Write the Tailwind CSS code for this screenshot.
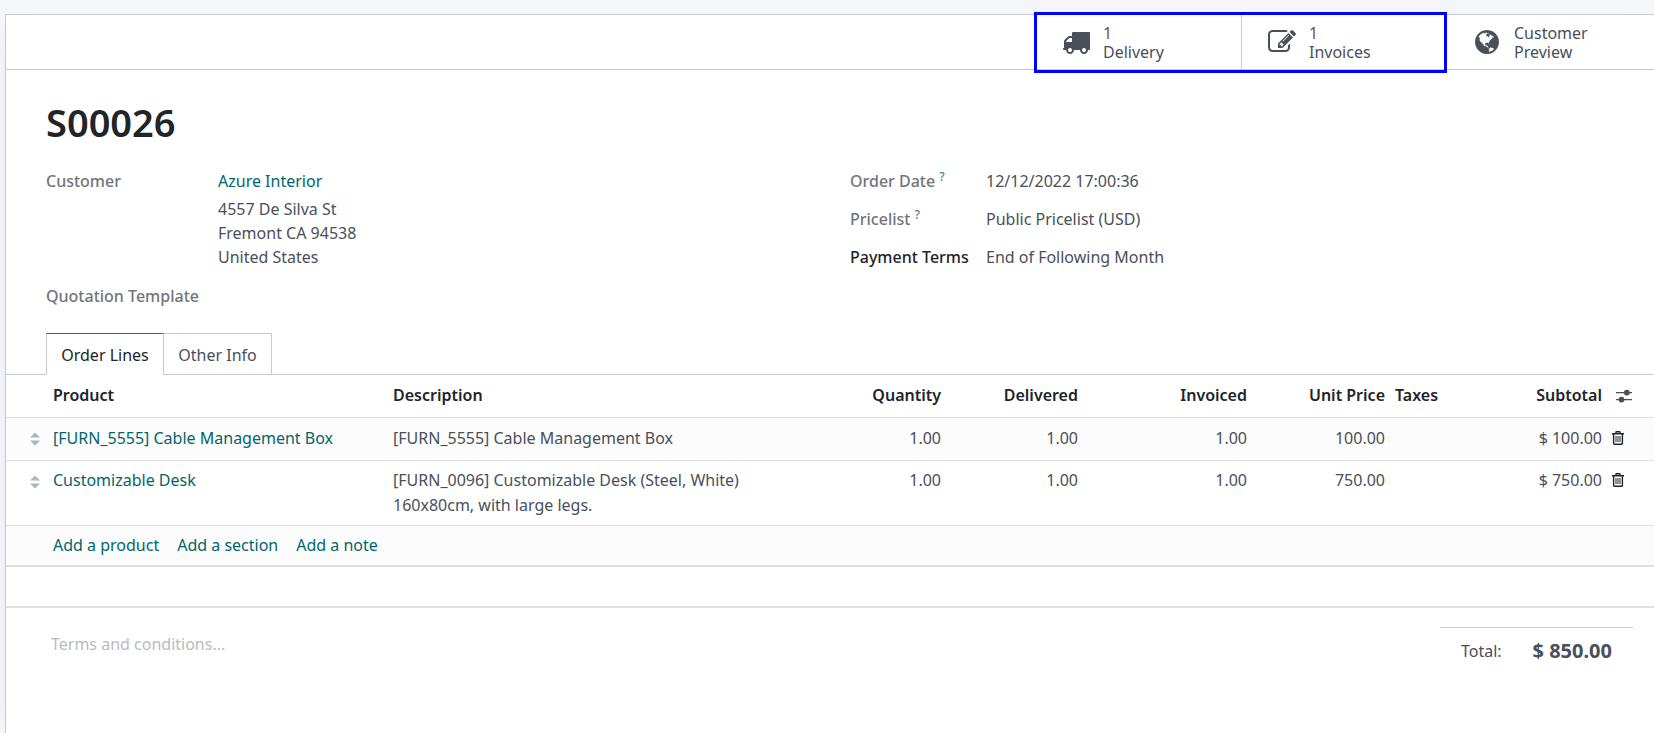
<!DOCTYPE html>
<html lang="en">
<head>
<meta charset="utf-8">
<title>S00026</title>
<script src="https://cdn.jsdelivr.net/npm/@tailwindcss/browser@4"></script>
</head>
<body class="min-h-screen flex flex-col bg-[#f5f6fa] pl-[5px] pt-[14px] text-base leading-6 text-[#4a4f59] overflow-x-hidden" style="font-family:'Noto Sans','Open Sans',sans-serif">
<svg class="hidden" aria-hidden="true">
  <symbol id="trash" viewBox="0 0 12 14"><path fill="none" stroke="#212529" stroke-width="1.4" d="M0 2.8h12M1.6 3v9.6q0 .7.7.7h7.4q.7 0 .7-.7V3M3.6 2.6L4.2.8h3.6l.6 1.8"/><path fill="none" stroke="#212529" d="M4 5v6M6 5v6M8 5v6"/></symbol>
  <symbol id="grip" viewBox="0 0 10 14"><path fill="#adb5bd" d="M0 5.5L5 .5l5 5zM0 8.5l5 5 5-5z"/></symbol>
</svg>
<main class="grow flex flex-col bg-white border-t border-l border-[#c8cad2] shadow-[0_5px_20px_-15px_rgba(0,0,0,0.4)]">
  <header class="flex justify-end h-[55px] border-b border-[#c8cad2] leading-[19px]">
    <div class="relative flex w-[411px]">
      <button class="flex-1 flex items-center gap-[13px] pl-[26px] text-left border-r border-[#c8cad2]">
        <svg class="size-7 shrink-0" viewBox="0 0 1792 1792" fill="#4a4f59"><path d="M640 1408q0-52-38-90t-90-38-90 38-38 90 38 90 90 38 90-38 38-90zm-384-512h384v-256h-158q-13 0-22 9l-195 195q-9 9-9 22v30zm1280 512q0-52-38-90t-90-38-90 38-38 90 38 90 90 38 90-38 38-90zm256-1088v1024q0 15-4 26.5t-13.5 18.5-16.5 11.5-23.5 6-22.5 2-25.5 0-22.5-.5q0 106-75 181t-181 75-181-75-75-181h-384q0 106-75 181t-181 75-181-75-75-181h-64q-3 0-22.5.5t-25.5 0-22.5-2-23.5-6-16.5-11.5-13.5-18.5-4-26.5q0-26 19-45t45-19v-320q0-8-.5-35t0-38 2.5-34.5 6.5-37 14-30.5 22.5-30l198-198q19-19 50.5-32t58.5-13h160v-192q0-26 19-45t45-19h1024q26 0 45 19t19 45z"/></svg>
        <span class="pt-0.5"><span class="block text-[#714b67]">1</span><span class="block">Delivery</span></span>
      </button>
      <button class="flex-1 flex items-center gap-[13px] pl-[26px] text-left">
        <svg class="size-7 shrink-0" viewBox="0 0 1792 1792" fill="#4a4f59"><path d="M888 1184l116-116-152-152-116 116v56h96v96h56zm440-720q-16-16-33 1l-350 350q-17 17-1 33t33-1l350-350q17-17 1-33zm80 594v190q0 119-84.5 203.5t-203.5 84.5h-832q-119 0-203.5-84.5t-84.5-203.5v-832q0-119 84.5-203.5t203.5-84.5h832q63 0 117 25 15 7 18 23 3 17-9 29l-49 49q-14 14-32 8-23-6-45-6h-832q-66 0-113 47t-47 113v832q0 66 47 113t113 47h832q66 0 113-47t47-113v-126q0-13 9-22l64-64q15-15 35-7t20 29zm-96-738l288 288-672 672h-288v-288zm444 132l-92 92-288-288 92-92q28-28 68-28t68 28l152 152q28 28 28 68t-28 68z"/></svg>
        <span class="pt-0.5"><span class="block text-[#714b67]">1</span><span class="block">Invoices</span></span>
      </button>
      <div class="absolute -left-0.5 right-0 -top-[3px] -bottom-1 border-3 border-[#0000ff] pointer-events-none"></div>
    </div>
    <button class="w-[207px] flex items-center gap-[13px] pl-[26px] text-left">
      <svg class="size-7 shrink-0" viewBox="0 0 1792 1792" fill="#4a4f59"><path d="M896 128q209 0 385.5 103t279.5 279.5 103 385.5-103 385.5-279.5 279.5-385.5 103-385.5-103-279.5-279.5-103-385.5 103-385.5 279.5-279.5 385.5-103zm274 521q-2 1-9.5 9.5t-13.5 9.5q2 0 4.5-5t5-11 3.5-7q6-7 22-15 14-6 52-12 34-8 51 11-2-2 9.5-13t14.5-12q3-2 15-4.5t15-7.5l2-22q-12 1-17.5-7t-6.5-21q0 2-6 8 0-7-4.5-8t-11.5 1-9 1q-10-3-15-7.5t-8-16.5-4-15q-2-5-9.5-11t-9.5-10q-1-2-2.5-5.5t-3-6.5-4-5.5-5.5-2.5-7 5-7.5 10-4.5 5q-3-2-6-1.5t-4.5 1-4.5 3-5 3.5q-3 2-8.5 3t-8.5 2q15-5-1-11-10-4-16-3 9-4 7.5-12t-8.5-14h5q-1-4-8.5-8.5t-17.5-8.5-13-6q-8-5-34-9.5t-33-.5q-5 6-4.5 10.5t4 14 3.5 12.5q1 6-5.5 13t-6.5 12q0 7 14 15.5t10 21.5q-3 8-16 16t-16 12q-5 8-1.5 18.5t10.5 16.5q2 2 1.5 4t-3.5 4.5-5.5 4-6.5 3.5l-3 2q-11 5-20.5-6t-13.5-26q-7-25-16-30-23-8-29 1-5-13-41-26-25-9-58-4 6-1 0-15-7-15-19-12 3-6 4-17.5t1-13.5q3-13 12-23 1-1 7-8.5t9.5-13.5.5-6q35 4 50-11 5-5 11.5-17t10.5-17q9-6 14-5.5t14.5 5.5 14.5 5q14 1 15.5-11t-7.5-20q12 1 3-17-4-7-8-9-12-4-27 5-8 4 2 8-1-1-9.5 10.5t-16.5 17.5-16-5q-1-1-5.5-13.5t-9.5-13.5q-8 0-16 15 3-8-11-15t-24-8q19-12-8-27-7-4-20.5-5t-19.5 4q-5 7-5.5 11.5t5 8 10.5 5.5 11.5 4 8.5 3q14 10 8 14-2 1-8.5 3.5t-11.5 4.5-6 4q-3 4 0 14t-2 14q-5-5-9-17.5t-7-16.5q7 9-25 6l-10-1q-4 0-16 2t-20.5 1-13.5-8q-4-8 0-20 1-4 4-2-4-3-11-9.5t-10-8.5q-46 15-94 41 6 1 12-1 5-2 13-6.5t10-5.5q34-14 42-7l5-5q14 16 20 25-7-4-30-1-20 6-22 12 7 12 5 18-4-3-11.5-10t-14.5-11-15-5q-16 0-22 1-146 80-235 222 7 7 12 8 4 1 5 9t2.5 11 11.5-3q9 8 3 19 1-1 44 27 19 17 21 21 3 11-10 18-1-2-9-9t-9-4q-3 5 .5 18.5t10.5 12.5q-7 0-9.5 16t-2.5 35.5-1 23.5l2 1q-3 12 5.5 34.5t21.5 19.5q-13 3 20 43 6 8 8 9 3 2 12 7.5t15 10 10 10.5q4 5 10 22.5t14 23.5q-2 6 9.5 20t10.5 23q-1 0-2.5 1t-2.5 1q3 7 15.5 14t15.5 13q1 3 2 10t3 11 8 2q2-20-24-62-15-25-17-29-3-5-5.5-15.5t-4.5-14.5q2 0 6 1.5t8.5 3.5 7.5 4 2 3q-3 7 2 17.5t12 18.5 17 19 12 13q6 6 14 19.5t0 13.5q9 0 20 10.5t17 19.5q5 8 8 26t5 24q2 7 8.5 13.5t12.5 9.5l16 8 13 7q5 2 18.5 10.5t21.5 11.5q10 4 16 4t14.5-2.5 13.5-3.5q15-2 29 15t21 21q36 19 55 11-2 1 .5 7.5t8 15.5 9 14.5 5.5 8.5q5 6 18 15t18 15q6-4 7-9-3 8 7 20t18 10q14-3 14-32-31 15-49-18 0-1-2.5-5.5t-4-8.5-2.5-8.5 0-7.5 5-3q9 0 10-3.5t-2-12.5-4-13q-1-8-11-20t-12-15q-5 9-16 8t-16-9q0 1-1.5 5.5t-1.5 6.5q-13 0-15-1 1-3 2.5-17.5t3.5-22.5q1-4 5.5-12t7.5-14.5 4-12.5-4.5-9.5-17.5-2.5q-19 1-26 20-1 3-3 10.5t-5 11.5-9 7q-7 3-24 2t-24-5q-13-8-22.5-29t-9.5-37q0-10 2.5-26.5t3-25-5.5-24.5q3-2 9-9.5t10-10.5q2-1 4.5-1.5t4.5 0 4-1.5 3-6q-1-1-4-3-3-3-4-3 7 3 28.5-1.5t27.5 1.5q15 11 22-2 0-1-2.5-9.5t-.5-13.5q5 27 29 9 3 3 15.5 5t17.5 5q3 2 7 5.5t5.5 4.5 5-.5 8.5-6.5q10 14 12 24 11 40 19 44 7 3 11 2t4.5-9.5 0-14-1.5-12.5l-1-8v-18l-1-8q-15-3-18.5-12t1.5-18.5 15-18.5q1-1 8-3.5t15.5-6.5 12.5-8q21-19 15-35 7 0 11-9-1 0-5-3t-7.5-5-4.5-2q9-5 2-16 5-3 7.5-11t7.5-10q9 12 21 2 8-8 1-16 5-7 20.5-10.5t18.5-9.5q7 2 8-2t1-12 3-12q4-5 15-9t13-5l17-11q3-4 0-4 18 2 31-11 10-11-6-20 3-6-3-9.5t-15-5.5q3-1 11.5-.5t10.5-1.5q15-10-7-16-17-5-43 12zm-163 877q206-36 351-189-3-3-12.5-4.5t-12.5-3.5q-18-7-24-8 1-7-2.5-13t-8-9-12.5-8-11-7q-2-2-7-6t-7-5.5-7.5-4.5-8.5-2-10 1l-3 1q-3 1-5.5 2.5t-5.5 3-4 3 0 2.5q-21-17-36-22-5-1-11-5.5t-10.5-7-10-1.5-11.5 7q-5 5-6 15t-2 13q-7-5 0-17.5t2-18.5q-3-6-10.5-4.5t-12 4.5-11.5 8.5-9 6.5-8.5 5.5-8.5 7.5q-3 4-6 12t-5 11q-2-4-11.5-6.5t-9.5-5.5q2 10 4 35t5 38q7 31-12 48-27 25-29 40-4 22 12 26 0 7-8 20.5t-7 21.5q0 6 2 16z"/></svg>
      <span class="w-24 pt-0.5">Customer Preview</span>
    </button>
  </header>

  <section class="pl-10 pt-7">
    <h1 class="text-[38px] leading-12 font-semibold text-[#212529]">S00026</h1>
    <div class="grid grid-cols-2 mt-[23px]">
      <dl class="grid grid-cols-[172px_1fr] content-start gap-y-[15px]">
        <dt class="font-medium text-[#71757b]">Customer</dt>
        <dd><a href="#" class="text-[#01666b] block mb-1">Azure Interior</a>4557 De Silva St<br>Fremont CA 94538<br>United States</dd>
        <dt class="font-medium text-[#71757b] col-span-2">Quotation Template</dt>
      </dl>
      <dl class="grid grid-cols-[136px_1fr] content-start gap-y-[14px]">
        <dt class="font-medium text-[#71757b]">Order Date <sup class="text-[#01666b]/80 text-xs leading-none -top-[6px]">?</sup></dt>
        <dd>12/12/2022 17:00:36</dd>
        <dt class="font-medium text-[#71757b]">Pricelist <sup class="text-[#01666b]/80 text-xs leading-none -top-[6px]">?</sup></dt>
        <dd>Public Pricelist (USD)</dd>
        <dt class="font-medium text-[#212529]">Payment Terms</dt>
        <dd>End of Following Month</dd>
      </dl>
    </div>
  </section>

  <nav class="flex mt-[25px] pl-10 h-[42px] border-b border-[#c8cad2]">
    <button class="w-[118px] h-[42px] bg-white border-x border-t border-x-[#c8cad2] border-t-[#714b67] text-[#212529]">Order Lines</button>
    <button class="w-[108px] h-[41px] pt-px border-r border-t border-[#c8cad2]">Other Info</button>
  </nav>

  <table class="w-full table-fixed leading-[25px] border-b-2 border-[#dfe0e6]">
    <colgroup><col class="w-[42px]"><col class="w-[340px]"><col><col class="w-[100px]"><col class="w-[137px]"><col class="w-[169px]"><col class="w-[138px]"><col class="w-[120px]"><col class="w-[97px]"><col class="w-[47px]"></colgroup>
    <thead>
      <tr class="h-[42px] border-b border-[#dfe0e4] text-[#212529] text-left whitespace-nowrap">
        <td></td><th class="px-[5px] font-semibold">Product</th><th class="px-[5px] font-semibold">Description</th><th class="px-[5px] font-semibold text-right">Quantity</th><th class="px-[5px] font-semibold text-right">Delivered</th><th class="px-[5px] font-semibold text-right">Invoiced</th><th class="px-[5px] font-semibold text-right">Unit Price</th><th class="px-[5px] font-semibold">Taxes</th><th class="px-[5px] font-semibold text-right">Subtotal</th>
        <td class="pl-[9px]"><button class="block" aria-label="Optional columns"><svg class="w-4 h-[14px]" viewBox="0 0 16 14" fill="#4a4f59"><path d="M0 3h16v1.3H0zM0 10h16v1.3H0z"/><circle cx="10.8" cy="3.6" r="2.9"/><circle cx="5.5" cy="10.6" r="2.9"/></svg></button></td>
      </tr>
    </thead>
    <tbody>
      <tr class="h-[43px] border-b border-[#dfe0e4] bg-[#fcfcfc] align-top">
        <td class="pt-[14px] pl-6"><svg class="w-[10px] h-[14px]"><use href="#grip"/></svg></td>
        <td class="px-[5px] pt-2"><a href="#" class="text-[#01666b]">[FURN_5555] Cable Management Box</a></td>
        <td class="px-[5px] pt-2">[FURN_5555] Cable Management Box</td>
        <td class="px-[5px] pt-2 text-right">1.00</td><td class="px-[5px] pt-2 text-right">1.00</td><td class="px-[5px] pt-2 text-right">1.00</td><td class="px-[5px] pt-2 text-right">100.00</td><td></td><td class="px-[5px] pt-2 text-right">$ 100.00</td>
        <td class="pt-[13px] pl-[5px]"><button class="block" aria-label="Delete row"><svg class="w-3 h-[14px]"><use href="#trash"/></svg></button></td>
      </tr>
      <tr class="border-b border-[#dfe0e4] align-top">
        <td class="pt-[14px] pl-6"><svg class="w-[10px] h-[14px]"><use href="#grip"/></svg></td>
        <td class="px-[5px] py-[7px]"><a href="#" class="text-[#01666b]">Customizable Desk</a></td>
        <td class="px-[5px] py-[7px]">[FURN_0096] Customizable Desk (Steel, White)<br>160x80cm, with large legs.</td>
        <td class="px-[5px] py-[7px] text-right">1.00</td><td class="px-[5px] py-[7px] text-right">1.00</td><td class="px-[5px] py-[7px] text-right">1.00</td><td class="px-[5px] py-[7px] text-right">750.00</td><td></td><td class="px-[5px] py-[7px] text-right">$ 750.00</td>
        <td class="pt-3 pl-[5px]"><button class="block" aria-label="Delete row"><svg class="w-3 h-[14px]"><use href="#trash"/></svg></button></td>
      </tr>
      <tr class="h-[41px] bg-[#fcfcfc]">
        <td></td>
        <td colspan="9" class="px-[5px] text-[#01666b]"><div class="flex gap-[18px]"><a href="#">Add a product</a><a href="#">Add a section</a><a href="#">Add a note</a></div></td>
      </tr>
    </tbody>
  </table>

  <section class="mt-[39px] border-t-2 border-[#dfe0e6] flex justify-between items-start pl-[45px] pr-[21px] pt-[19px]">
    <textarea aria-label="Terms and conditions" rows="2" class="w-1/2 resize-none mt-[5px] outline-none placeholder:text-[#b9bbc0]" placeholder="Terms and conditions..."></textarea>
    <dl class="w-[193px] border-t border-[#c8cad0] flex justify-between items-center pl-[21px] pr-[21px] pt-[9px]">
      <dt>Total:</dt><dd class="text-xl leading-7 font-bold">$ 850.00</dd>
    </dl>
  </section>
</main>
</body>
</html>
